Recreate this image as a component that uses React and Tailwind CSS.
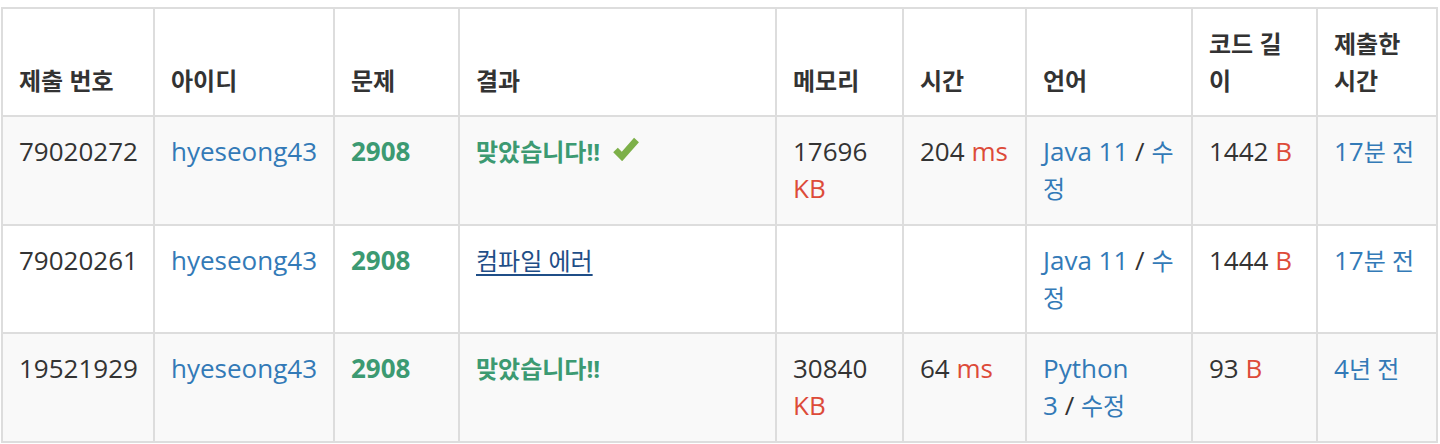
const K = ({ children, className = '' }) => (
    <span className={`text-[24px] ${className}`}>{children}</span>
);

// glyphicon style check mark
const Check = () => (
    <svg
        viewBox="0 0 26 26"
        className="ml-[13px] inline-block h-[26px] w-[26px] align-baseline"
    >
        <polyline
            points="2.5,15 9,21.5 23.5,5"
            fill="none"
            stroke="#7db049"
            strokeWidth="6.5"
            strokeLinejoin="miter"
        />
    </svg>
);

const headers = [
    <K>제출 번호</K>,
    <K>아이디</K>,
    <K>문제</K>,
    <K>결과</K>,
    <K>메모리</K>,
    <K>시간</K>,
    <K>언어</K>,
    <K>코드 길이</K>,
    <K>제출한 시간</K>,
];

const rows = [
    {
        id: '79020272',
        result: 'ac',
        check: true,
        memory: '17696',
        time: '204',
        lang: <>Java 11</>,
        length: '1442',
        ago: <>17<K>분 전</K></>,
        bg: 'bg-[#f9f9f9]',
    },
    {
        id: '79020261',
        result: 'ce',
        memory: null,
        time: null,
        lang: <>Java 11</>,
        length: '1444',
        ago: <>17<K>분 전</K></>,
        bg: 'bg-white',
    },
    {
        id: '19521929',
        result: 'ac',
        memory: '30840',
        time: '64',
        lang: <>Python<br />3</>,
        length: '93',
        ago: <>4<K>년 전</K></>,
        bg: 'bg-[#f9f9f9]',
    },
];

function Cell({ children, className = '' }) {
    return (
        <div className={`border-l-2 border-t-2 border-[#ddd] p-4 ${className}`}>
            {children}
        </div>
    );
}

export default function App() {
    return (
        <div className="min-h-screen bg-white pt-[7px] pl-px font-['Open_Sans','Noto_Sans_CJK_KR',sans-serif] text-[26px] leading-[37px] text-[#333]">
            <div className="grid w-fit grid-cols-[152px_180px_125px_317px_127px_123px_166px_125px_120px] grid-rows-[108px_109px_108px_109px] border-r-2 border-b-2 border-[#ddd]">
                {/* Header */}
                {headers.map((h, i) => (
                    <Cell key={i} className="flex flex-col justify-end bg-white font-bold">
                        <div>{h}</div>
                    </Cell>
                ))}

                {/* Rows */}
                {rows.map((r) => (
                    <div key={r.id} className="contents">
                        <Cell className={r.bg}>{r.id}</Cell>
                        <Cell className={r.bg}>
                            <span className="text-[#337ab7]">hyeseong43</span>
                        </Cell>
                        <Cell className={r.bg}>
                            <span className="font-bold text-[#3c9a72]">2908</span>
                        </Cell>
                        <Cell className={r.bg}>
                            {r.result === 'ac' ? (
                                <span className="font-bold text-[#3c9a72]">
                                    <K>맞았습니다!!</K>
                                    {r.check && <Check />}
                                </span>
                            ) : (
                                <span className="text-[#1f4e87] underline decoration-2 underline-offset-[4px]">
                                    <K>컴파일 에러</K>
                                </span>
                            )}
                        </Cell>
                        <Cell className={r.bg}>
                            {r.memory && (
                                <>
                                    {r.memory} <span className="text-[#dd4b39]">KB</span>
                                </>
                            )}
                        </Cell>
                        <Cell className={r.bg}>
                            {r.time && (
                                <>
                                    {r.time} <span className="text-[#dd4b39]">ms</span>
                                </>
                            )}
                        </Cell>
                        <Cell className={r.bg}>
                            <span className="text-[#337ab7]">{r.lang}</span> /{' '}
                            <K className="text-[#337ab7]">수정</K>
                        </Cell>
                        <Cell className={r.bg}>
                            {r.length} <span className="text-[#dd4b39]">B</span>
                        </Cell>
                        <Cell className={r.bg}>
                            <span className="text-[#337ab7]">{r.ago}</span>
                        </Cell>
                    </div>
                ))}
            </div>
        </div>
    );
}
